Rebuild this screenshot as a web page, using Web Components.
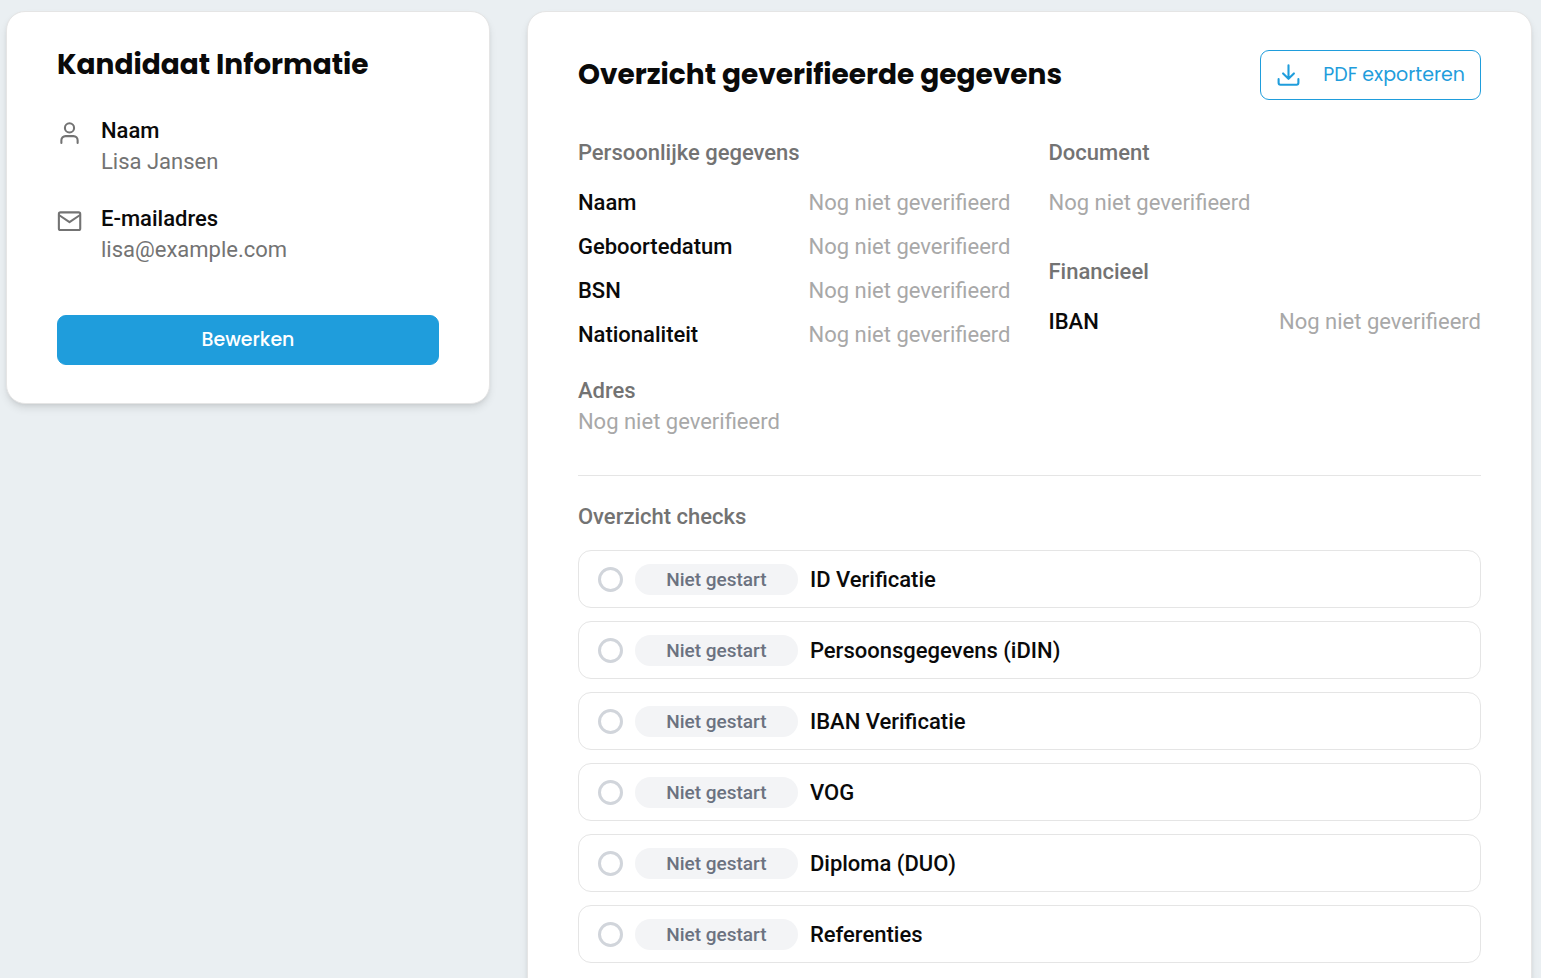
<!DOCTYPE html>
<html lang="nl">
<head>
<meta charset="utf-8">
<meta name="viewport" content="width=device-width, initial-scale=1">
<title>Kandidaat</title>
<style>
  html { background: #eaeff2; }
  body {
    margin: 0;
    color: #0a0a0a;
    font: 400 22px/31px Roboto, "Liberation Sans", sans-serif;
    --heading-font: Poppins, Inter, "Liberation Sans", sans-serif;
    --brand: #1f9ddc;
    --line: #e5e5e5;
    --muted: #737373;
    --faint: #a8a8a8;
  }
</style>
</head>
<body>
<candidate-page></candidate-page>

<script>
class BaseElement extends HTMLElement {
  connectedCallback() {
    if (this.shadowRoot) return;
    this.attachShadow({ mode: 'open' }).innerHTML = this.render();
  }
}

customElements.define('ui-card', class extends BaseElement {
  render() {
    return `<style>
      :host { display: block; box-sizing: border-box; padding: 38px 50px; min-width: 0;
        background: #fff; border: 1px solid var(--line); border-radius: 19px;
        box-shadow: 0 5px 8px -1px rgb(0 0 0 / .1), 0 2px 5px -2px rgb(0 0 0 / .1); }
    </style><slot></slot>`;
  }
});

customElements.define('ui-icon', class extends BaseElement {
  render() {
    const shapes = {
      user: '<circle cx="12" cy="6.600" r="4.400"/><path d="M4.200 21v-2.500a4 4 0 0 1 4-4h7.600a4 4 0 0 1 4 4V21"/>',
      mail: '<rect x="1.800" y="3.200" width="20.500" height="17" rx="1.500"/><path d="M2.200 6L12 12.600 21.800 6"/>',
      download: '<path d="M12 2.200v13M6.800 10L12 15.200l5.200-5.200M2.500 15.500v3.500a1.800 1.800 0 0 0 1.800 1.800h15.400a1.800 1.800 0 0 0 1.800-1.800v-3.500"/>'
    };
    return `<style>
      :host { display: block; flex: none; width: 25px; height: 25px; }
      svg { display: block; width: 100%; height: 100%; fill: none; stroke: currentColor;
        stroke-width: 2; stroke-linecap: round; stroke-linejoin: round; }
    </style><svg viewBox="0 0 24 24" aria-hidden="true">${shapes[this.getAttribute('name')]}</svg>`;
  }
});

customElements.define('ui-button', class extends BaseElement {
  render() {
    return `<style>
      :host { display: block; flex: none; }
      button { display: flex; align-items: center; justify-content: center; gap: 22px;
        box-sizing: border-box; width: 100%; height: 50px; padding: 0 15px; margin: 0; cursor: pointer;
        border: 1px solid var(--brand); border-radius: 9px; background: var(--brand); color: #fff;
        font: 500 19px/28px var(--heading-font); }
      :host([outline]) button { background: #fff; color: var(--brand); font-weight: 400; }
    </style><button type="button"><slot name="icon"></slot><slot></slot></button>`;
  }
});

customElements.define('contact-item', class extends BaseElement {
  render() {
    return `<style>
      :host { display: flex; gap: 19px; color: var(--muted); }
      ui-icon { margin-top: 6px; }
      .label { color: #0a0a0a; font-weight: 500; }
      .value { overflow-wrap: anywhere; }
    </style>
    <ui-icon name="${this.getAttribute('icon')}"></ui-icon>
    <div><div class="label">${this.getAttribute('label')}</div><div class="value"><slot></slot></div></div>`;
  }
});

customElements.define('candidate-card', class extends BaseElement {
  render() {
    return `<style>
      :host { display: block; }
      h2 { margin: 0 0 35px; font: 700 28px/30px var(--heading-font); }
      .items { display: grid; gap: 26px; margin-bottom: 50px; }
    </style>
    <ui-card>
      <h2>Kandidaat Informatie</h2>
      <div class="items">
        <contact-item icon="user" label="Naam">Lisa Jansen</contact-item>
        <contact-item icon="mail" label="E-mailadres">lisa@example.com</contact-item>
      </div>
      <ui-button>Bewerken</ui-button>
    </ui-card>`;
  }
});

customElements.define('data-section', class extends BaseElement {
  render() {
    return `<style>
      :host { display: grid; gap: 19px; }
      :host([compact]) { gap: 0; }
      h3 { margin: 0; font: inherit; font-weight: 500; color: var(--muted); }
      .rows { display: grid; gap: 13px; color: var(--faint); }
    </style><h3>${this.getAttribute('heading')}</h3><div class="rows"><slot></slot></div>`;
  }
});

customElements.define('data-row', class extends BaseElement {
  render() {
    return `<style>
      :host { display: flex; justify-content: space-between; gap: 12px; }
      .label { color: #0a0a0a; font-weight: 500; }
    </style><span class="label">${this.getAttribute('label')}</span><span><slot></slot></span>`;
  }
});

customElements.define('check-row', class extends BaseElement {
  render() {
    return `<style>
      :host { display: flex; align-items: center; gap: 12px; box-sizing: border-box; height: 58px;
        padding: 0 19px; border: 1px solid var(--line); border-radius: 13px; font-weight: 500; }
      .ring { flex: none; box-sizing: border-box; width: 25px; height: 25px;
        border: 3px solid #d1d5db; border-radius: 50%; }
      .status { flex: none; width: 163px; border-radius: 16px; background: #f3f4f6; color: #6b7280;
        font-size: 19px; text-align: center; }
    </style>
    <span class="ring"></span><span class="status">${this.getAttribute('status')}</span><span><slot></slot></span>`;
  }
});

customElements.define('verified-card', class extends BaseElement {
  render() {
    const checks = ['ID Verificatie', 'Persoonsgegevens (iDIN)', 'IBAN Verificatie', 'VOG', 'Diploma (DUO)', 'Referenties'];
    const empty = 'Nog niet geverifieerd';
    return `<style>
      :host { display: block; }
      header { display: flex; align-items: center; justify-content: space-between; gap: 24px; margin-bottom: 37px; }
      h2 { margin: 0; font: 700 28px/30px var(--heading-font); }
      .data { display: grid; grid-template-columns: 1fr 1fr; gap: 38px; padding-bottom: 38px;
        border-bottom: 1px solid var(--line); }
      .column { display: grid; align-content: start; gap: 25px; }
      .wide { gap: 38px; }
      h3 { margin: 25px 0 18px; font: inherit; font-weight: 500; color: var(--muted); }
      ul { display: grid; gap: 13px; margin: 0; padding: 0; list-style: none; }
    </style>
    <ui-card>
      <header>
        <h2>Overzicht geverifieerde gegevens</h2>
        <ui-button outline><ui-icon slot="icon" name="download"></ui-icon>PDF exporteren</ui-button>
      </header>
      <div class="data">
        <div class="column">
          <data-section heading="Persoonlijke gegevens">
            ${['Naam', 'Geboortedatum', 'BSN', 'Nationaliteit'].map(l => `<data-row label="${l}">${empty}</data-row>`).join('')}
          </data-section>
          <data-section heading="Adres" compact>${empty}</data-section>
        </div>
        <div class="column wide">
          <data-section heading="Document">${empty}</data-section>
          <data-section heading="Financieel"><data-row label="IBAN">${empty}</data-row></data-section>
        </div>
      </div>
      <h3>Overzicht checks</h3>
      <ul>${checks.map(c => `<li><check-row status="Niet gestart">${c}</check-row></li>`).join('')}</ul>
    </ui-card>`;
  }
});

customElements.define('candidate-page', class extends BaseElement {
  render() {
    return `<style>
      :host { display: grid; grid-template-columns: 13fr 27fr; align-items: start; gap: 37px;
        padding: 11px 9px 12px 6px; }
      @media (max-width: 1100px) { :host { grid-template-columns: 1fr; } }
    </style>
    <candidate-card></candidate-card>
    <verified-card></verified-card>`;
  }
});
</script>
</body>
</html>
